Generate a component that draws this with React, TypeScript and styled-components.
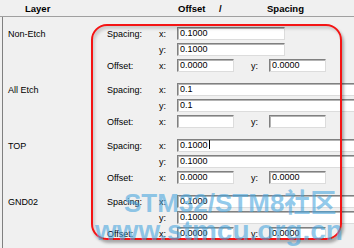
import React from "react";
import styled, { createGlobalStyle } from "styled-components";

const GlobalStyle = createGlobalStyle`
  html, body {
    margin: 0;
    padding: 0;
    background: #f0f0f0;
    overflow: hidden;
  }
  body {
    font-family: "Liberation Sans", Arial, sans-serif;
    color: #000;
  }
`;

// --- window frame ---
const Window = styled.div`
  position: relative;
  width: 354px;
  height: 248px;
  overflow: hidden;
  background: #f0f0f0;
`;

const Header = styled.div`
  display: grid;
  grid-template-columns: 153px 41px 48px auto;
  align-items: center;
  height: 16px;
  padding-left: 25px;
  border-bottom: 1px solid #a0a0a0;
  font-size: 9.5px;
  font-weight: bold;
  white-space: nowrap;
`;

const Body = styled.div`
  display: flex;
  flex-direction: column;
  gap: 11px;
  height: 231px;
  margin-left: 2px;
  padding-top: 10px;
  border-left: 1px solid #808080;
  box-sizing: border-box;
`;

// --- one layer block ---
const Section = styled.div`
  display: grid;
  grid-template-columns: 104px 52px 18px 1fr;
  grid-auto-rows: 13px;
  row-gap: 3px;
  align-items: center;
  font-size: 9px;
  white-space: nowrap;
`;

const LayerName = styled.div`
  padding-left: 5px;
`;

const Label = styled.div``;

const FieldRow = styled.div`
  display: flex;
  align-items: center;
  height: 13px;
`;

const Field = styled.div<{ $width?: number }>`
  box-sizing: border-box;
  width: ${(p) => (p.$width ? `${p.$width}px` : "200px")};
  flex: none;
  height: 13px;
  padding-left: 2px;
  background: #fff;
  border-style: solid;
  border-width: 1px;
  border-color: #808080 #dcdcdc #dcdcdc #808080;
  box-shadow: inset 1px 1px 0 #b4b4b4;
  font-size: 9px;
  line-height: 11px;
  overflow: hidden;
`;

const SubAxis = styled.span`
  width: 18px;
  margin-left: 17px;
`;

const Caret = styled.span`
  display: inline-block;
  width: 1px;
  height: 9px;
  margin-left: 1px;
  vertical-align: -1px;
  background: #000;
`;

// --- annotation on top ---
const RedFrame = styled.div`
  position: absolute;
  left: 91px;
  top: 24px;
  width: 251px;
  height: 216px;
  box-sizing: border-box;
  border: 2px solid #f41414;
  border-radius: 16px;
  box-shadow: 2px 3px 3px rgba(0, 0, 0, 0.3), inset 2px 3px 3px rgba(0, 0, 0, 0.15);
  pointer-events: none;
`;

const Watermark = styled.div`
  position: absolute;
  left: 95px;
  top: 190px;
  color: rgba(74, 166, 222, 0.6);
  font-family: "Liberation Sans", "Noto Sans CJK SC", sans-serif;
  font-weight: bold;
  white-space: nowrap;
  pointer-events: none;
`;

const MarkLine = styled.div<{ $indent: number; $size: number }>`
  margin-left: ${(p) => p.$indent}px;
  font-size: ${(p) => p.$size}px;
  line-height: 27px;
`;

type Layer = {
  name: string;
  sx: string;
  sy: string;
  ox: string;
  oy: string;
  wide?: boolean;
  caret?: boolean;
};

const layers: Layer[] = [
  { name: "Non-Etch", sx: "0.1000", sy: "0.1000", ox: "0.0000", oy: "0.0000" },
  { name: "All Etch", sx: "0.1", sy: "0.1", ox: "", oy: "", wide: true },
  { name: "TOP", sx: "0.1000", sy: "0.1000", ox: "0.0000", oy: "0.0000", wide: true, caret: true },
  { name: "GND02", sx: "0.1000", sy: "0.1000", ox: "0.0000", oy: "0.0000", wide: true },
];

export default function App() {
  return (
    <Window>
      <GlobalStyle />
      <Header>
        <span>Layer</span>
        <span>Offset</span>
        <span>/</span>
        <span>Spacing</span>
      </Header>
      <Body>
        {layers.map((l) => (
          <Section key={l.name}>
            <LayerName>{l.name}</LayerName>
            <Label>Spacing:</Label>
            <Label>x:</Label>
            <Field $width={l.wide ? undefined : 108}>
              {l.sx}
              {l.caret && <Caret />}
            </Field>

            <span />
            <span />
            <Label>y:</Label>
            <Field $width={l.wide ? undefined : 108}>{l.sy}</Field>

            <span />
            <Label>Offset:</Label>
            <Label>x:</Label>
            <FieldRow>
              <Field $width={57}>{l.ox}</Field>
              <SubAxis>y:</SubAxis>
              <Field $width={57}>{l.oy}</Field>
            </FieldRow>
          </Section>
        ))}
      </Body>
      <RedFrame />
      <Watermark>
        <MarkLine $indent={29} $size={26}>STM32/STM8社区</MarkLine>
        <MarkLine $indent={0} $size={28}>www.stmcu.org.cn</MarkLine>
      </Watermark>
    </Window>
  );
}
